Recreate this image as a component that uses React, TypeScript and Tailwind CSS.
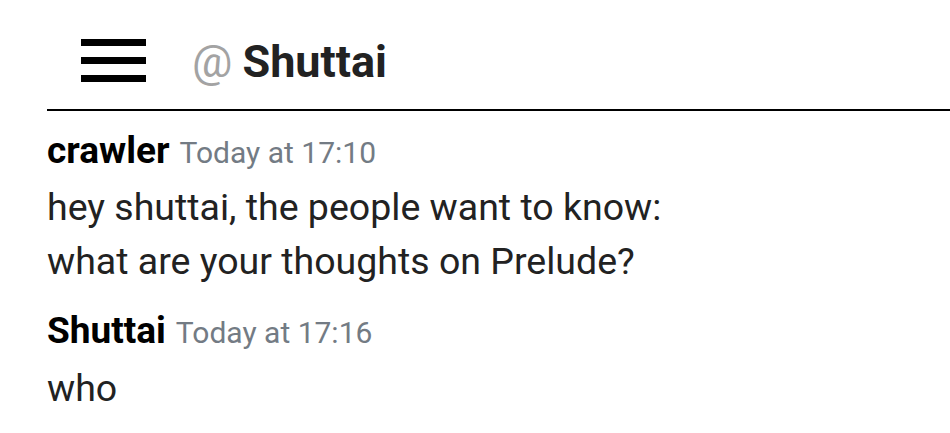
export default function App() {
  return (
    <div
      className="w-[950px] h-[433px] bg-white overflow-hidden"
      style={{ fontFamily: "Roboto, 'Liberation Sans', sans-serif" }}
    >
      <div className="ml-[47px]">
        <div className="h-[108px] flex items-start pt-[39px]">
          <svg width="65" height="43" viewBox="0 0 65 43" className="ml-[34px] shrink-0">
            <rect x="0" y="0" width="65" height="7" fill="#000" />
            <rect x="0" y="18" width="65" height="7" fill="#000" />
            <rect x="0" y="36" width="65" height="7" fill="#000" />
          </svg>
          <div className="ml-[46px] text-[45px] leading-none font-bold text-[#222222] whitespace-nowrap">
            <span className="text-[#a3a3a3] font-normal">@</span>
            <span className="ml-[10px]">Shuttai</span>
          </div>
        </div>
        <div className="h-[2px] bg-black mt-[1px]" />
        <div className="pt-[14px]">
          <div className="text-[37px] leading-[52px] whitespace-nowrap">
            <span className="font-bold text-black">crawler</span>
            <span className="text-[30px] leading-none text-[#737b84] ml-[10px]">Today at 17:10</span>
          </div>
          <div className="mt-[3px] text-[37.5px] leading-[54px] text-[#222222] whitespace-nowrap">
            <div>hey shuttai, the people want to know:</div>
            <div>what are your thoughts on Prelude?</div>
          </div>
          <div className="mt-[17px] text-[37px] leading-[52px] whitespace-nowrap">
            <span className="font-bold text-black">Shuttai</span>
            <span className="text-[30px] leading-none text-[#737b84] ml-[10px]">Today at 17:16</span>
          </div>
          <div className="mt-[4px] text-[37.5px] leading-[54px] text-[#222222]">
            <div>who</div>
          </div>
        </div>
      </div>
    </div>
  );
}
